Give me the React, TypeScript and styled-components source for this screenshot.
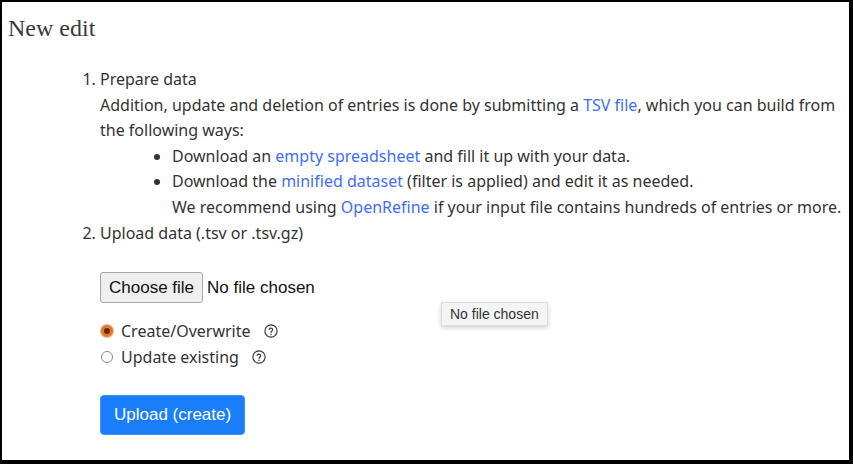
import React from 'react'
import styled, { createGlobalStyle } from 'styled-components'

const GlobalStyle = createGlobalStyle`
  html, body {
    margin: 0;
    padding: 0;
    background: #000;
  }
  body {
    font-family: 'Noto Sans', 'Open Sans', sans-serif;
    color: #333;
  }
`

const Frame = styled.div`
  box-sizing: border-box;
  width: 847px;
  height: 458px;
  margin: 2px 4px 4px 2px;
  background: #fff;
  padding: 10px 6px 0 6px;
  position: relative;
  overflow: hidden;
`

const Title = styled.h2`
  margin: 0;
  font-family: 'Liberation Serif', 'DejaVu Serif', serif;
  font-weight: normal;
  font-size: 24px;
  line-height: 32px;
  color: #3a3a3a;
`

const Steps = styled.ol`
  margin: 23px 0 0 0;
  padding-left: 92px;
  font-size: 16px;
  line-height: 25.6px;
  color: #333;
`

const Step = styled.li`
  padding-left: 0;
`

const Bullets = styled.ul`
  margin: 0;
  padding-left: 72px;
  list-style: disc;
`

const Link = styled.a`
  color: #3f6ef5;
  text-decoration: none;
`

const Note = styled.div``

const UploadForm = styled.div`
  margin: 26px 0 0 92px;
  display: flex;
  flex-direction: column;
  align-items: flex-start;
  font-size: 16px;
  color: #333;
`

const FileRow = styled.div`
  display: flex;
  align-items: center;
  gap: 4px;
  font-family: 'Liberation Sans', Arial, sans-serif;
  font-size: 17px;
  color: #111;
`

const FileButton = styled.button`
  font-family: 'Liberation Sans', Arial, sans-serif;
  font-size: 17px;
  color: #111;
  height: 31px;
  padding: 0 8px;
  background: #efefef;
  border: 1px solid #a8a8a8;
  border-radius: 3px;
`

const Radios = styled.div`
  margin-top: 17px;
  display: flex;
  flex-direction: column;
  gap: 5px;
`

const RadioRow = styled.label`
  display: flex;
  align-items: center;
  height: 21px;
  gap: 8px;
`

const RadioDot = styled.span<{ $checked?: boolean }>`
  box-sizing: border-box;
  width: 12px;
  height: 12px;
  margin-left: 1px;
  border-radius: 50%;
  border: ${(p) => (p.$checked ? '3px solid #e4792b' : '1px solid #888')};
  background: ${(p) => (p.$checked ? '#5a3014' : '#fff')};
  box-shadow: ${(p) => (p.$checked ? '0 0 0 1px #f3b27f' : 'none')};
`

const Help = styled.span`
  display: inline-flex;
  margin-left: 5px;
`

const SubmitButton = styled.button`
  margin-top: 28px;
  height: 40px;
  padding: 0 13px;
  background: #1a7efb;
  color: #fff;
  border: 1px solid #3c8ffc;
  border-radius: 4px;
  font-family: 'Liberation Sans', Arial, sans-serif;
  font-size: 17px;
`

const Tooltip = styled.div`
  position: absolute;
  left: 439px;
  top: 300px;
  padding: 2px 8px;
  background: #f4f4f4;
  border: 1px solid #dcdcdc;
  box-shadow: 0 2px 5px rgba(0, 0, 0, 0.18);
  font-family: 'Liberation Sans', Arial, sans-serif;
  font-size: 14px;
  line-height: 18px;
  color: #333;
`

function HelpIcon() {
  return (
    <Help>
      <svg width="14" height="14" viewBox="0 0 16 16" fill="none">
        <circle cx="8" cy="8" r="7" stroke="#333" strokeWidth="1.3" />
        <path
          d="M5.9 6.2a2.1 2.1 0 0 1 4.1.4c0 1.3-1.9 1.6-1.9 2.9"
          stroke="#333"
          strokeWidth="1.3"
          strokeLinecap="round"
        />
        <circle cx="8.1" cy="11.6" r="0.85" fill="#333" />
      </svg>
    </Help>
  )
}

export default function App() {
  return (
    <>
      <GlobalStyle />
      <Frame>
        <Title>New edit</Title>
        <Steps>
          <Step>
            Prepare data
            <Note>
              Addition, update and deletion of entries is done by submitting a <Link href="#">TSV file</Link>, which
              you can build from the following ways:
            </Note>
            <Bullets>
              <li>
                Download an <Link href="#">empty spreadsheet</Link> and fill it up with your data.
              </li>
              <li>
                Download the <Link href="#">minified dataset</Link> (filter is applied) and edit it as needed.
                <Note>
                  We recommend using <Link href="#">OpenRefine</Link> if your input file contains hundreds of entries
                  or more.
                </Note>
              </li>
            </Bullets>
          </Step>
          <Step>Upload data (.tsv or .tsv.gz)</Step>
        </Steps>
        <UploadForm>
          <FileRow>
            <FileButton>Choose file</FileButton>
            <span>No file chosen</span>
          </FileRow>
          <Radios>
            <RadioRow>
              <RadioDot $checked />
              <span>Create/Overwrite</span>
              <HelpIcon />
            </RadioRow>
            <RadioRow>
              <RadioDot />
              <span>Update existing</span>
              <HelpIcon />
            </RadioRow>
          </Radios>
          <SubmitButton>Upload (create)</SubmitButton>
        </UploadForm>
        <Tooltip>No file chosen</Tooltip>
      </Frame>
    </>
  )
}
